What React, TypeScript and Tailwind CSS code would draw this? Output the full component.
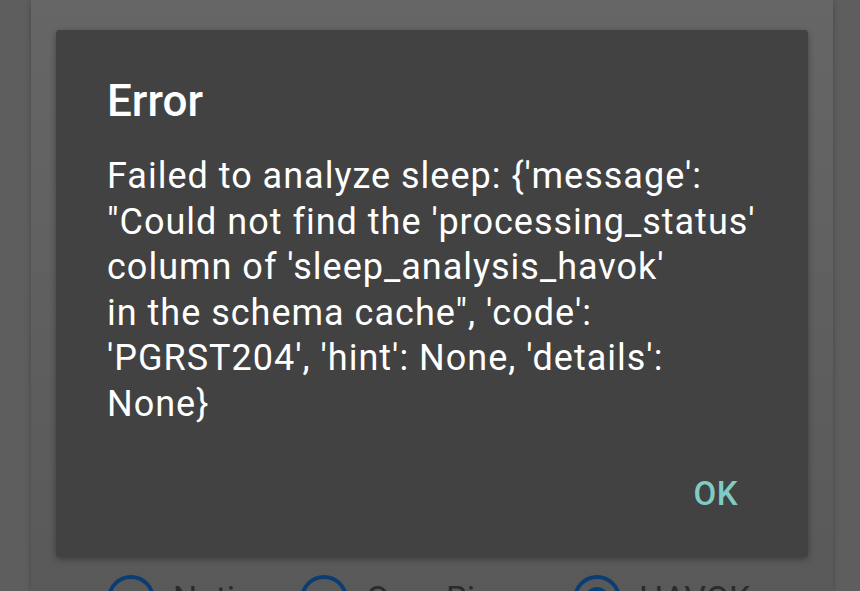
import React from "react";

const lines = [
  "Failed to analyze sleep: {'message':",
  "\"Could not find the 'processing_status'",
  "column of 'sleep_analysis_havok'",
  "in the schema cache\", 'code':",
  "'PGRST204', 'hint': None, 'details':",
  "None}",
];

const sources = [
  { label: "Native", selected: false },
  { label: "Oura Ring", selected: false },
  { label: "HAVOK", selected: true },
];

export default function App() {
  return (
    <div
      className="w-full h-[591px] overflow-hidden bg-[#5e5e5e] flex pl-[31px] pr-[27px]"
      style={{ fontFamily: "Roboto, 'Noto Sans', sans-serif" }}
    >
      <div className="flex-1 flex flex-col bg-gradient-to-b from-[#666666] to-[#585958] shadow-[0_0_6px_rgba(0,0,0,0.25)] pt-[30px] px-[25px]">
        {/* dialog */}
        <div className="h-[527px] shrink-0 bg-[#424242] rounded-[4px] shadow-[0_2px_6px_rgba(0,0,0,0.35)] flex flex-col pl-[51px] pr-[48px]">
          <h2 className="text-[44px] leading-[52px] font-medium text-white mt-[45px]">Error</h2>
          <div className="mt-[27px] text-[36px] leading-[45.5px] tracking-[1px] text-white">
            {lines.map((l) => (
              <div key={l} className="whitespace-nowrap">
                {l}
              </div>
            ))}
          </div>
          <div className="flex-1" />
          <div className="flex justify-end pb-[43px]">
            <button className="text-[33px] leading-[40px] font-medium tracking-[0.5px] text-[#80cbc4] mr-[22px]">OK</button>
          </div>
        </div>

        {/* radio row behind scrim */}
        <div className="flex items-start pl-[51px] mt-[16px]">
          {sources.map((s, i) => (
            <div
              key={s.label}
              className={`flex items-center gap-[18px] ${i === 0 ? "w-[193px]" : i === 1 ? "w-[273px]" : ""}`}
            >
              <div className="w-[48px] h-[48px] rounded-full border-[4px] border-[#0b3d73] flex items-center justify-center shrink-0">
                {s.selected && <div className="w-[24px] h-[24px] rounded-full bg-[#0b3d73]" />}
              </div>
              <span className="text-[34px] text-[#2b2b2b]">{s.label}</span>
            </div>
          ))}
        </div>
      </div>
    </div>
  );
}
